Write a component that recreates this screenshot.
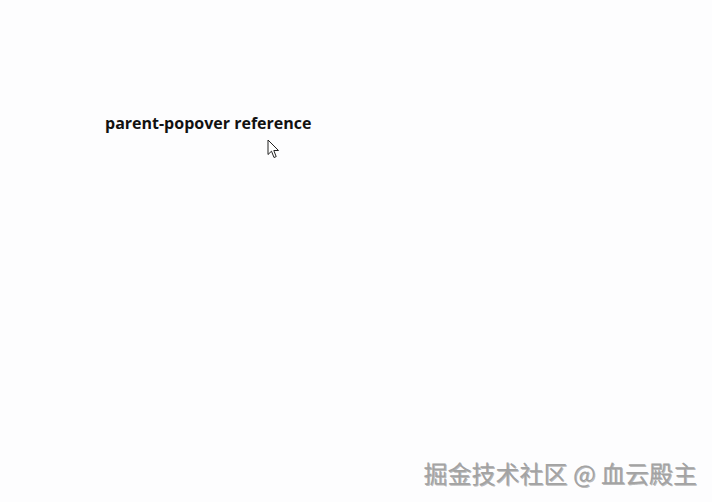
import React from 'react';

function Cursor() {
  return (
    <svg width="13" height="20" viewBox="0 0 13 20" className="absolute left-[267px] top-[139px]">
      <path
        d="M1 1 L1 15.5 L4.5 12.2 L7 18.5 L9.2 17.6 L6.8 11.5 L11.5 11.5 Z"
        fill="#ffffff"
        stroke="#222222"
        strokeWidth="1"
        strokeLinejoin="round"
      />
    </svg>
  );
}

export default function App() {
  return (
    <div className="relative w-[712px] h-[502px] bg-[#fdfdfe] overflow-hidden">
      <div className="pt-[111px] pl-[105px]">
        <span className="text-[16px] leading-6 font-bold text-[#111] font-['Open_Sans',sans-serif]">
          parent-popover reference
        </span>
      </div>
      <Cursor />
      <div className="absolute right-[15px] bottom-[17px] text-[24px] leading-none text-[#a3a3a3] font-['Noto_Sans_CJK_SC',sans-serif] [text-shadow:1px_1px_0_rgba(60,60,60,0.35)]">
        掘金技术社区 @ 血云殿主
      </div>
    </div>
  );
}
